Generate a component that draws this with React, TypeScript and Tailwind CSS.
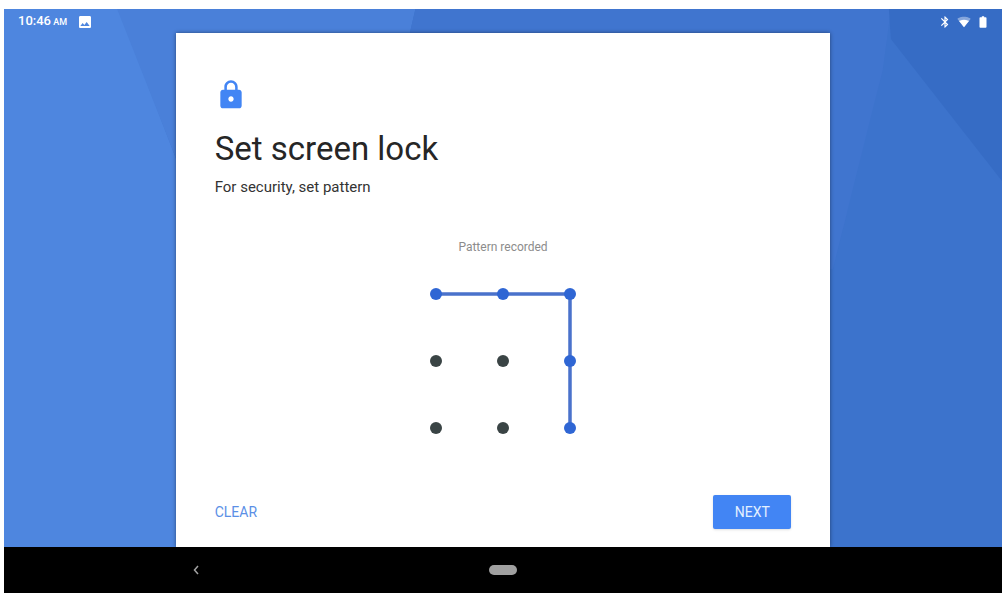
import React from 'react';

// order in which the dots are connected, numbered 0-8 from top left
const pattern = [0, 1, 2, 5, 8];

const dotX = (dot: number) => 6 + (dot % 3) * 67;
const dotY = (dot: number) => 6 + Math.floor(dot / 3) * 67;

const Wallpaper = () => (
  <svg className="absolute inset-0 h-full w-full" viewBox="0 0 997 538" preserveAspectRatio="none" aria-hidden="true">
    <rect width="997" height="538" fill="#3c73cc" />
    <path d="M0 0H115L172 150V538H0Z" fill="#4e86df" />
    <path d="M113 0H411L405 26L300 300H172V150Z" fill="#4a80d9" />
    <path d="M411 0H886L878 60L828 260H300L405 26Z" fill="#4075cf" />
    <path d="M884 0H997V172L886 30Z" fill="#366cc5" />
  </svg>
);

const StatusBar = () => (
  <div className="relative flex h-6 items-center justify-between pt-px pr-3 pl-3.5 text-white">
    <div className="flex items-center">
      <p className="text-[13px] leading-4 font-medium">
        10:46 <span className="-ml-px text-[9px]">AM</span>
      </p>
      <svg className="ml-2.5 h-4 w-4" viewBox="0 0 24 24" fill="currentColor" aria-hidden="true">
        <path d="M21 19V5c0-1.1-.9-2-2-2H5c-1.1 0-2 .9-2 2v14c0 1.1.9 2 2 2h14c1.1 0 2-.9 2-2zM8.500 13.500l2.500 3.010L14.500 12l4.500 6H5l3.500-4.500z" />
      </svg>
    </div>
    <div className="flex items-center gap-[5px]">
      <svg className="h-3.5 w-3.5" viewBox="0 0 24 24" fill="currentColor" aria-hidden="true">
        <path d="M17.710 7.710L12 2h-1v7.590L6.410 5 5 6.410 10.590 12 5 17.590 6.410 19 11 14.410V22h1l5.710-5.710-4.300-4.290 4.300-4.290zM13 5.830l1.880 1.880L13 9.590V5.830zm1.880 10.460L13 18.170v-3.760l1.880 1.880z" />
      </svg>
      <svg className="h-3.5 w-3.5" viewBox="0 0 24 24" fill="currentColor" aria-hidden="true">
        <path d="M12 21L23.600 6.500C23.200 6.200 18.700 3 12 3S.8 6.200.4 6.500L12 21z" opacity="0.4" />
        <path d="M12 21L20.500 10.400C20.100 10.100 17 8 12 8s-8.100 2.100-8.500 2.400L12 21z" />
      </svg>
      <svg className="h-3.5 w-3.5" viewBox="0 0 24 24" fill="currentColor" aria-hidden="true">
        <path d="M16.700 4H14V2h-4v2H7.300C6.600 4 6 4.600 6 5.300v15.300C6 21.400 6.600 22 7.300 22h9.300c.7 0 1.400-.6 1.400-1.300V5.300C18 4.600 17.400 4 16.700 4z" />
      </svg>
    </div>
  </div>
);

const PatternGrid = () => (
  <svg className="mt-[33px] h-[146px] w-[146px]" viewBox="0 0 146 146" role="img" aria-label="Pattern">
    <polyline points={pattern.map((dot) => `${dotX(dot)},${dotY(dot)}`).join(' ')} fill="none" stroke="#4a72cb" strokeWidth="3.500" />
    {Array.from({ length: 9 }, (_, dot) => (
      <circle key={dot} cx={dotX(dot)} cy={dotY(dot)} r="6" fill={pattern.includes(dot) ? '#2f66d4' : '#3a4445'} />
    ))}
  </svg>
);

const LockCard = () => (
  <main className="relative mx-auto flex w-[65.6%] flex-1 flex-col bg-white px-[39px] pt-[46px] pb-[18px] shadow-[0_0_4px_rgba(0,0,0,0.45)]">
    <svg className="h-8 w-8" viewBox="0 0 24 24" fill="#4285f4" aria-hidden="true">
      <path d="M18 8h-1V6c0-2.760-2.240-5-5-5S7 3.240 7 6v2H6c-1.100 0-2 .9-2 2v10c0 1.100.9 2 2 2h12c1.100 0 2-.9 2-2V10c0-1.100-.9-2-2-2zm-6 9c-1.100 0-2-.9-2-2s.9-2 2-2 2 .9 2 2-.9 2-2 2zm3.100-9H8.900V6c0-1.710 1.390-3.100 3.100-3.100 1.710 0 3.100 1.390 3.100 3.100v2z" />
    </svg>
    <h1 className="mt-[18px] text-[33px] leading-10 text-[#262626]">Set screen lock</h1>
    <p className="mt-2 text-[15px] leading-5 text-[#333333]">For security, set pattern</p>

    <div className="mt-[42px] flex flex-col items-center">
      <p className="text-xs leading-4 text-[#8c8c8c]">Pattern recorded</p>
      <PatternGrid />
    </div>

    <div className="mt-auto flex items-center justify-between text-sm">
      <button type="button" className="h-[34px] text-[#5b8fe6]">
        CLEAR
      </button>
      <button type="button" className="h-[34px] w-[78px] rounded-xs bg-[#4285f4] text-[#e3f0ff] shadow-sm">
        NEXT
      </button>
    </div>
  </main>
);

const NavBar = () => (
  <nav className="relative bg-black">
    <div className="mx-auto grid h-[46px] w-[65.6%] grid-cols-3 items-center px-3">
      <button type="button" aria-label="Back" className="flex h-4 w-4 items-center justify-center">
        <svg className="h-2.5 w-1.5" viewBox="0 0 6 10" fill="none" stroke="#a3a3a3" strokeWidth="1.500" aria-hidden="true">
          <path d="M5 1L1.500 5L5 9" />
        </svg>
      </button>
      <button type="button" aria-label="Home" className="h-2.5 w-7 justify-self-center rounded-full bg-[#a0a0a0]" />
    </div>
  </nav>
);

const App = () => {
  return (
    <div className="flex min-h-screen flex-col bg-white pt-[9px] pr-px pl-1 font-['Roboto',sans-serif]">
      <div className="relative flex flex-1 flex-col overflow-hidden">
        <Wallpaper />
        <StatusBar />
        <LockCard />
      </div>
      <NavBar />
    </div>
  );
};

export default App;
